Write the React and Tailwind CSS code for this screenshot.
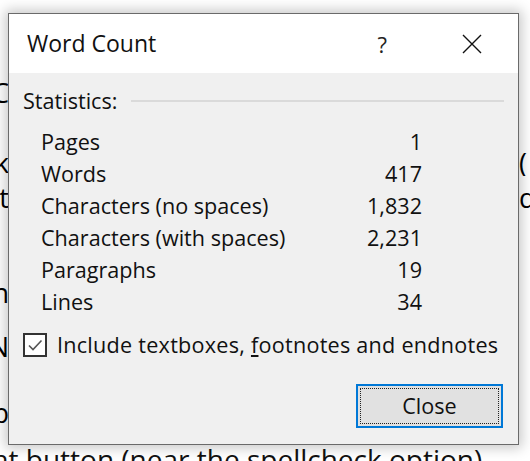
import React from "react";

const docFont = { fontFamily: '"Open Sans", "Noto Sans", sans-serif' };
const uiFont = { fontFamily: '"Open Sans", "Noto Sans", sans-serif' };

function DocLine({ mt, left, right }) {
  return (
    <div className={`flex justify-between h-[27px] ${mt} text-[27px] leading-[27px] text-black whitespace-nowrap`}>
      <div className="w-[9px] overflow-hidden flex justify-end">
        <span className="shrink-0">{left}</span>
      </div>
      <div className="w-[11px] overflow-hidden flex justify-start">
        <span className="shrink-0">{right}</span>
      </div>
    </div>
  );
}

const rows = [
  ["Pages", "1"],
  ["Words", "417"],
  ["Characters (no spaces)", "1,832"],
  ["Characters (with spaces)", "2,231"],
  ["Paragraphs", "19"],
  ["Lines", "34"],
];

export default function App() {
  return (
    <div className="relative w-[530px] h-[461px] overflow-hidden bg-white" style={docFont}>
      {/* document behind the dialog */}
      <div className="flex flex-col">
        <DocLine mt="mt-[79px]" left="Word C" right="" />
        <DocLine mt="mt-[43px]" left="Click" right="(" />
        <DocLine mt="mt-[8px]" left="about" right="de" />
        <DocLine mt="mt-[68px]" left="Section" right="" />
        <DocLine mt="mt-[27px]" left="N" right="" />
        <DocLine mt="mt-[39px]" left="b" right="" />
        <div className="mt-[19px] -ml-[7px] h-[28px] text-[28px] leading-[28px] whitespace-nowrap text-[#111]">
          at button (near the spellcheck option).
        </div>
      </div>

      {/* dialog window */}
      <div
        className="absolute left-[8px] top-[13px] w-[511px] h-[432px] border border-[#6a6a6a] bg-[#f0f0f0] flex flex-col shadow-[0_0_12px_3px_rgba(0,0,0,0.22)] text-[#111]"
        style={uiFont}
      >
        <div className="h-[59px] bg-white flex items-center pl-[18px] pr-[36px]">
          <span className="flex-1 text-[23px]">Word Count</span>
          <span className="text-[22px] leading-none mr-[75px] text-[#222]">?</span>
          <svg width="20" height="20" viewBox="0 0 20 20" className="shrink-0">
            <path d="M1 1 L19 19 M19 1 L1 19" stroke="#111" strokeWidth="1.4" fill="none" />
          </svg>
        </div>

        <div className="flex flex-col px-[14px] pt-[13px] text-[21.6px]">
          <div className="flex items-center h-[30px]">
            <span>Statistics:</span>
            <div className="flex-1 h-[2px] bg-[#dadada] ml-[14px]" />
          </div>

          <div className="flex flex-col mt-[10px] pl-[18px] pr-[82px]">
            {rows.map(([label, value]) => (
              <div key={label} className="flex justify-between items-center h-[32px]">
                <span>{label}</span>
                <span>{value}</span>
              </div>
            ))}
          </div>

          <div className="flex items-center h-[30px] mt-[12px] gap-[10px]">
            <div className="w-[24px] h-[24px] border-2 border-[#333] bg-white flex items-center justify-center shrink-0">
              <svg width="16" height="16" viewBox="0 0 16 16">
                <path d="M2 8.5 L6 12.5 L14.5 3.5" stroke="#555" strokeWidth="1.6" fill="none" />
              </svg>
            </div>
            <span className="whitespace-nowrap tracking-[0.25px]">
              Include textboxes, <span className="underline underline-offset-2">f</span>ootnotes and endnotes
            </span>
          </div>

          <div className="flex justify-end mt-[24px] pr-[1px]">
            <div className="w-[147px] h-[44px] border-2 border-[#0078d7] bg-[#e1e1e1] p-[2px]">
              <div className="w-full h-full border border-dotted border-[#222] flex items-center justify-center">
                <span>Close</span>
              </div>
            </div>
          </div>
        </div>
      </div>
    </div>
  );
}
